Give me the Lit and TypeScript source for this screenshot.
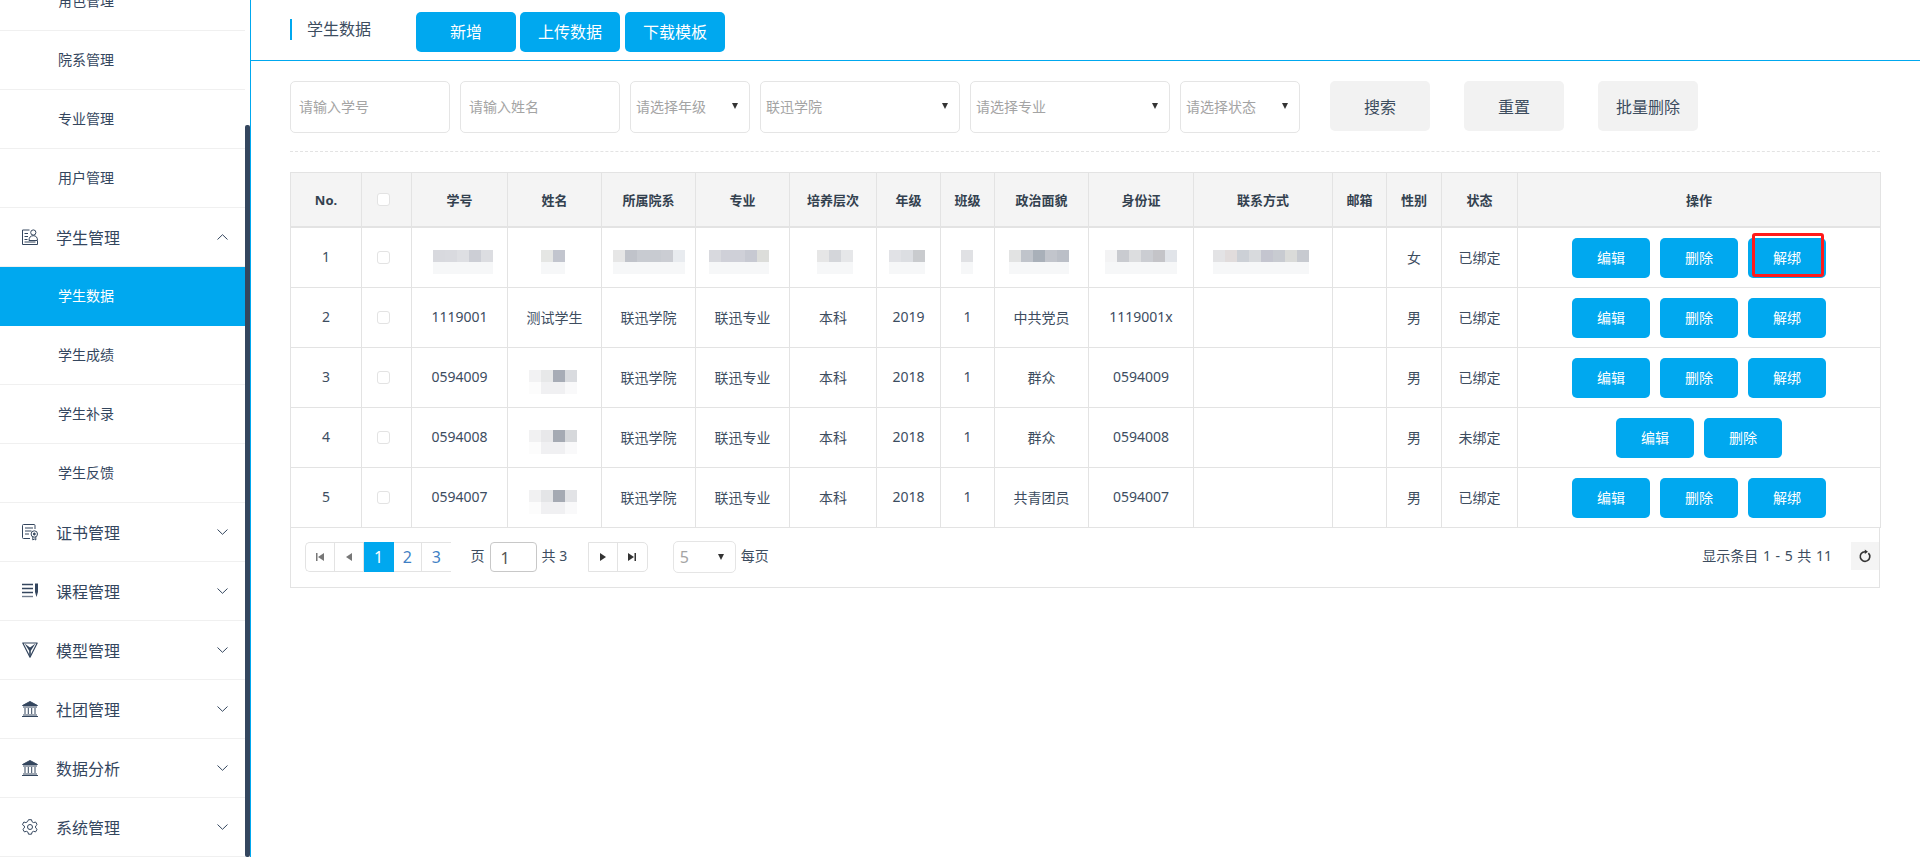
import { LitElement, html, css, svg, nothing } from "lit";
import { customElement } from "lit/decorators.js";

type Blur = { left: number; top: string[]; bottom?: string[] };
type Cell = string | Blur;

const widths = [71, 50, 96, 94, 94, 94, 87, 64, 54, 94, 105, 139, 54, 55, 76, 363];
const heads = ["No.", "", "学号", "姓名", "所属院系", "专业", "培养层次", "年级", "班级", "政治面貌", "身份证", "联系方式", "邮箱", "性别", "状态", "操作"];

const pale = "#f6f7f8";
const rows: { cells: Cell[]; unbound?: boolean; flagged?: boolean }[] = [
  {
    flagged: true,
    cells: [
      "1",
      { left: 21, top: ["#d8d9de", "#d9dadf", "#dedfe3", "#ccced5", "#dcdde1"] },
      { left: 33, top: ["#e5e6e4", "#c2c5ce"] },
      { left: 11, top: ["#e6e6e6", "#c0c3ca", "#c8cbd1", "#c8cbd1", "#cbcdd3", "#e8ebef"] },
      { left: 13, top: ["#d8d9de", "#cfd0d8", "#cfd0d8", "#c7c9d2", "#dcddda"] },
      { left: 27, top: ["#e6e6e6", "#d4d6da", "#e6e7e9"] },
      { left: 12, top: ["#e1e2e6", "#dcdee2", "#c9cbce"] },
      { left: 20, top: ["#e0e1e4"] },
      { left: 14, top: ["#e2e3e3", "#c0c4cb", "#a9b0b9", "#c2c5cc", "#bbbfc7"] },
      { left: 16, top: ["#f3f3f4", "#c9cbd0", "#dcdddf", "#cbcdd2", "#c4c4c8", "#e1e4e9"] },
      { left: 19, top: ["#e3e3e5", "#e1dcdc", "#ccd0d6", "#d8dadd", "#c4c5cf", "#c8cbd1", "#dadbd9", "#c7cad0"] },
      "",
      "女",
      "已绑定",
    ],
  },
  { cells: ["2", "1119001", "测试学生", "联迅学院", "联迅专业", "本科", "2019", "1", "中共党员", "1119001x", "", "", "男", "已绑定"] },
  {
    cells: [
      "3", "0594009",
      { left: 21, top: ["#f2f2f3", "#e7e8e9", "#a7acb6", "#d9dbdf"], bottom: ["#fcfcfc", "#f0f0f2", "#f0f0f2", "#f9f9fa"] },
      "联迅学院", "联迅专业", "本科", "2018", "1", "群众", "0594009", "", "", "男", "已绑定",
    ],
  },
  {
    unbound: true,
    cells: [
      "4", "0594008",
      { left: 21, top: ["#f1f1f2", "#e8e8ea", "#a5aab3", "#d6d8db"], bottom: ["#fcfcfc", "#f0f0f2", "#f0f0f2", "#f9f9fa"] },
      "联迅学院", "联迅专业", "本科", "2018", "1", "群众", "0594008", "", "", "男", "未绑定",
    ],
  },
  {
    cells: [
      "5", "0594007",
      { left: 21, top: ["#f1f1f2", "#e4e5e7", "#a5aab3", "#e2e3e6"], bottom: ["#fcfcfc", "#f0f0f2", "#f0f0f2", "#f9f9fa"] },
      "联迅学院", "联迅专业", "本科", "2018", "1", "共青团员", "0594007", "", "", "男", "已绑定",
    ],
  },
];

const bank = svg`<path d="M8 .5 15.5 4.500H.5z" fill="currentColor"/><path d="M1 6h14M3 7v6M6.300 7v6M9.700 7v6M13 7v6M1 14h14M0 15.500h16"/>`;

const icons = {
  student: svg`<path d="M7.500 1H.5v14.500h15V12"/><circle cx="11.300" cy="3.500" r="2.600"/><path d="M7 11.500c0-3.200 1.600-4.800 4.300-4.800s4.200 1.600 4.200 4.800zM2.500 4.500h3.500M2.500 7.500h3.500M2.500 10.500h3M2.500 13h11"/>`,
  cert: svg`<path d="M13 5V1.500a1 1 0 0 0-1-1H1.500a1 1 0 0 0-1 1v12a1 1 0 0 0 1 1H8M3 4h8M3 7h6.500M3 10h4"/><circle cx="12.300" cy="10" r="3.200"/><circle cx="12.300" cy="10" r="1" fill="currentColor"/><path d="M10.800 13v3l1.500-1 1.500 1v-3"/>`,
  course: svg`<path stroke-width="1.400" d="M0 1.500h11M0 5.500h11M0 9.500h11"/><path stroke-width="1.400" opacity=".7" d="M0 13.500h11"/><path fill="currentColor" stroke="none" d="M13 .5h3v8.500l-1.500 5-1.500-5z"/>`,
  model: svg`<path stroke-width="1.200" stroke-linejoin="round" d="M.8 1h14.400L8 15.200z"/><path fill="currentColor" stroke="none" d="M2.500 1.500 8 5.500l5.500-4L8.800 8.800V14H7.200V8.800z"/>`,
  bank,
  gear: svg`<path stroke-linejoin="round" d="M6.500.7h3l.5 2 1.600.9 2-.6 1.500 2.600-1.500 1.400v1.900l1.500 1.400-1.500 2.600-2-.6-1.600.9-.5 2h-3l-.5-2-1.600-.9-2 .6-1.500-2.600 1.500-1.400V7L.4 5.600 1.900 3l2 .6 1.600-.9z"/><circle cx="8" cy="8" r="2.500"/>`,
};

const menu: { label: string; icon?: keyof typeof icons; open?: boolean; active?: boolean }[] = [
  { label: "角色管理" },
  { label: "院系管理" },
  { label: "专业管理" },
  { label: "用户管理" },
  { label: "学生管理", icon: "student", open: true },
  { label: "学生数据", active: true },
  { label: "学生成绩" },
  { label: "学生补录" },
  { label: "学生反馈" },
  { label: "证书管理", icon: "cert" },
  { label: "课程管理", icon: "course" },
  { label: "模型管理", icon: "model" },
  { label: "社团管理", icon: "bank" },
  { label: "数据分析", icon: "bank" },
  { label: "系统管理", icon: "gear" },
];

@customElement("app-root")
export class AppRoot extends LitElement {
  static styles = css`
    :host {
      display: flex;
      height: 100vh;
      overflow: hidden;
      background: #fff;
      color: #3d4d5f;
      font-family: "Noto Sans", "Noto Sans CJK SC", sans-serif;
      font-size: 14px;
    }
    .sidebar {
      display: flex;
      flex: none;
      width: 250px;
      height: 857px;
      overflow: hidden;
    }
    .menu {
      flex: none;
      width: 245px;
      margin-top: -28px;
    }
    .menu__item {
      display: flex;
      align-items: center;
      box-sizing: border-box;
      height: 59px;
      border-bottom: 1px solid #f0f0f0;
      color: #34465e;
      font-size: 16px;
    }
    .menu__item--sub {
      padding: 0 0 2px 58px;
      font-size: 14px;
    }
    .menu__item--active {
      background: #00a8ef;
      border-bottom-color: #00a8ef;
      color: #fff;
    }
    .menu__icon {
      flex: none;
      width: 16px;
      height: 16px;
      margin: 0 18px 0 22px;
      fill: none;
      stroke: currentColor;
      stroke-width: 1;
      overflow: visible;
    }
    .menu__chevron {
      flex: none;
      width: 11px;
      height: 6px;
      margin: 0 17px 0 auto;
      fill: none;
      stroke: currentColor;
      stroke-width: 1;
    }
    .scrollbar {
      flex: none;
      width: 5px;
    }
    .scrollbar__thumb {
      height: 732px;
      margin-top: 125px;
      background: #34465e;
      border-radius: 2px;
    }
    .main {
      flex: 1;
      min-width: 0;
      border-left: 1px solid #00a8ef;
    }
    .topbar {
      display: flex;
      align-items: center;
      box-sizing: border-box;
      height: 61px;
      padding: 0 0 1px 39px;
      border-bottom: 1px solid #00a8ef;
    }
    .topbar__title {
      box-sizing: border-box;
      width: 126px;
      height: 21px;
      margin-top: -1px;
      padding-left: 15px;
      border-left: 2px solid #00a8ef;
      color: #3d4d5f;
      font-size: 16px;
      line-height: 21px;
    }
    .topbar__buttons {
      display: flex;
      gap: 4px;
      margin-top: 5px;
    }
    .topbar__buttons .btn-primary:last-child {
      margin-left: 1px;
    }
    button {
      font-family: inherit;
      border: 0;
      padding: 0;
    }
    .btn-primary {
      padding-bottom: 2px;
      background: #00a8ef;
      color: #fff;
      border-radius: 5px;
    }
    .topbar__buttons .btn-primary {
      width: 100px;
      height: 40px;
      font-size: 16px;
    }
    .content {
      padding: 20px 40px 0 39px;
    }
    .filters {
      display: flex;
      gap: 10px;
      height: 52px;
      padding-bottom: 18px;
      border-bottom: 1px dashed #e3e3e3;
    }
    .field {
      display: flex;
      align-items: center;
      justify-content: space-between;
      box-sizing: border-box;
      height: 52px;
      padding: 0 11px 2px 5px;
      border: 1px solid #e5e5e5;
      border-radius: 5px;
      background: #fff;
      color: #a4a4a4;
      font: inherit;
    }
    input.field {
      width: 160px;
      padding: 0 8px 2px;
      outline: none;
    }
    input.field::placeholder {
      color: #a4a4a4;
      opacity: 1;
    }
    .field--s {
      width: 120px;
    }
    .field--l {
      width: 200px;
    }
    .arrow {
      flex: none;
      width: 0;
      height: 0;
      border-left: 3px solid transparent;
      border-right: 3px solid transparent;
      border-top: 6px solid #333;
    }
    .filters__actions {
      display: flex;
      gap: 34px;
      margin-left: 20px;
    }
    .btn-plain {
      width: 100px;
      height: 50px;
      background: #f2f2f2;
      border-radius: 5px;
      color: #3d4d5f;
      font-size: 16px;
    }
    table {
      width: 1590px;
      margin-top: 20px;
      border-collapse: collapse;
      table-layout: fixed;
    }
    th,
    td {
      padding: 0;
      border: 1px solid #e3e3e3;
      text-align: center;
      font-weight: 400;
    }
    th {
      height: 53px;
      border-bottom-width: 2px;
      background: #f4f4f4;
      color: #33414f;
      font-size: 13px;
      font-weight: 700;
    }
    td {
      height: 59px;
    }
    td.text {
      height: 57px;
      padding-bottom: 2px;
    }
    .check {
      display: block;
      box-sizing: border-box;
      width: 13px;
      height: 13px;
      margin-left: 15px;
      border: 1px solid #e3e3e3;
      border-radius: 3px;
      background: #fff;
    }
    .blur {
      display: block;
      margin-top: 8px;
    }
    .actions {
      display: flex;
      justify-content: center;
      gap: 10px;
    }
    .actions .btn-primary {
      position: relative;
      width: 78px;
      height: 40px;
      font-size: 14px;
    }
    .flagged::after {
      content: "";
      position: absolute;
      top: -5px;
      left: 4px;
      right: 2px;
      bottom: 1px;
      border: 3px solid #ff1a1a;
      border-radius: 3px;
    }
    .footer {
      display: flex;
      align-items: flex-start;
      box-sizing: border-box;
      width: 1590px;
      height: 60px;
      padding: 14px 0 0 14px;
      border: 1px solid #e3e3e3;
      border-top: 0;
    }
    .pager {
      display: flex;
      height: 30px;
      border: solid #e3e3e3;
      border-width: 1px 0 1px 1px;
      box-sizing: border-box;
      border-radius: 5px 0 0 5px;
    }
    .pager--end {
      border-width: 1px;
      border-radius: 0 5px 5px 0;
      margin-left: 21px;
    }
    .pager__cell {
      display: flex;
      align-items: center;
      justify-content: center;
      box-sizing: border-box;
      width: 28.5px;
      border-right: 1px solid #e3e3e3;
      color: #3f7fc4;
      font-size: 16px;
    }
    .pager__cell:first-child {
      width: 29px;
    }
    .pager__cell:last-child {
      border-right: 0;
    }
    .pager__cell--active {
      width: 30px;
      margin: -1px 0;
      background: #00a8ef;
      border: 0;
      color: #fff;
    }
    .pager__cell svg {
      width: 8px;
      height: 8px;
      fill: #777;
    }
    .pager--end svg {
      fill: #333;
    }
    .pager-text {
      line-height: 28px;
      white-space: nowrap;
    }
    .pager-text--page {
      margin-left: 20px;
    }
    .page-input {
      box-sizing: border-box;
      width: 47px;
      height: 30px;
      margin: 0 5px;
      padding: 2px 0 0 10px;
      border: 1px solid #c8c8c8;
      border-radius: 4px;
      color: #555;
      font: inherit;
      font-size: 16px;
    }
    .size {
      width: 63px;
      height: 32px;
      margin: -1px 5px 0 25px;
      padding: 0 11px 0 6px;
      font-size: 16px;
    }
    .footer__info {
      margin-left: auto;
      line-height: 28px;
      word-spacing: 1px;
    }
    .refresh {
      display: flex;
      align-items: center;
      justify-content: center;
      flex: none;
      width: 28px;
      height: 28px;
      margin-left: 19px;
      background: #f4f4f4;
    }
    .refresh svg {
      width: 12px;
      height: 12px;
      fill: none;
      stroke: #333;
      stroke-width: 1.6;
      overflow: visible;
    }
  `;

  renderBlur(b: Blur) {
    return html`<svg
      class="blur"
      width=${b.top.length * 12}
      height="24"
      style="margin-left:${b.left}px"
    >
      ${b.top.map((c, i) => svg`<rect x=${i * 12} y="0" width="12" height="12" fill=${c} />`)}
      ${b.top.map(
        (_, i) => svg`<rect x=${i * 12} y="12" width="12" height="12" fill=${b.bottom ? b.bottom[i] : pale} />`
      )}
    </svg>`;
  }

  renderCell(c: Cell) {
    return typeof c === "string"
      ? html`<td class="text">${c}</td>`
      : html`<td>${this.renderBlur(c)}</td>`;
  }

  renderMenu() {
    return menu.map((m) =>
      m.icon
        ? html`<div class="menu__item">
            <svg class="menu__icon" viewBox="0 0 16 16">${icons[m.icon]}</svg>
            <span>${m.label}</span>
            <svg class="menu__chevron" viewBox="0 0 11 6">
              <path d=${m.open ? "M.5 5.500 5.500.7l5 4.800" : "M.5.500l5 4.800 5-4.800"} />
            </svg>
          </div>`
        : html`<div class="menu__item menu__item--sub ${m.active ? "menu__item--active" : ""}">${m.label}</div>`
    );
  }

  render() {
    return html`
      <aside class="sidebar">
        <nav class="menu">${this.renderMenu()}</nav>
        <div class="scrollbar"><div class="scrollbar__thumb"></div></div>
      </aside>
      <main class="main">
        <header class="topbar">
          <div class="topbar__title">学生数据</div>
          <div class="topbar__buttons">
            <button class="btn-primary">新增</button>
            <button class="btn-primary">上传数据</button>
            <button class="btn-primary">下载模板</button>
          </div>
        </header>
        <section class="content">
          <div class="filters">
            <input class="field" placeholder="请输入学号" />
            <input class="field" placeholder="请输入姓名" />
            <div class="field field--s">请选择年级<i class="arrow"></i></div>
            <div class="field field--l">联迅学院<i class="arrow"></i></div>
            <div class="field field--l">请选择专业<i class="arrow"></i></div>
            <div class="field field--s">请选择状态<i class="arrow"></i></div>
            <div class="filters__actions">
              <button class="btn-plain">搜索</button>
              <button class="btn-plain">重置</button>
              <button class="btn-plain">批量删除</button>
            </div>
          </div>
          <table>
            <colgroup>
              ${widths.map((w) => html`<col style="width:${w}px" />`)}
            </colgroup>
            <thead>
              <tr>
                ${heads.map((h, i) => html`<th>${i === 1 ? html`<i class="check"></i>` : h}</th>`)}
              </tr>
            </thead>
            <tbody>
              ${rows.map(
                (r) => html`<tr>
                  ${this.renderCell(r.cells[0])}
                  <td><i class="check"></i></td>
                  ${r.cells.slice(1).map((c) => this.renderCell(c))}
                  <td>
                    <div class="actions">
                      <button class="btn-primary">编辑</button>
                      <button class="btn-primary">删除</button>
                      ${r.unbound
                        ? nothing
                        : html`<button class="btn-primary ${r.flagged ? "flagged" : ""}">解绑</button>`}
                    </div>
                  </td>
                </tr>`
              )}
            </tbody>
          </table>
          <div class="footer">
            <div class="pager">
              <span class="pager__cell"><svg viewBox="0 0 8 8"><path d="M0 0h1.500v8H0zM8 0v8L2 4z" /></svg></span>
              <span class="pager__cell"><svg viewBox="0 0 8 8"><path d="M7 0v8L1 4z" /></svg></span>
              <span class="pager__cell pager__cell--active">1</span>
              <span class="pager__cell">2</span>
              <span class="pager__cell">3</span>
            </div>
            <span class="pager-text pager-text--page">页</span>
            <input class="page-input" value="1" />
            <span class="pager-text">共 3</span>
            <div class="pager pager--end">
              <span class="pager__cell"><svg viewBox="0 0 8 8"><path d="M1 0v8l6-4z" /></svg></span>
              <span class="pager__cell"><svg viewBox="0 0 8 8"><path d="M0 0v8l6-4zM6.500 0H8v8H6.500z" /></svg></span>
            </div>
            <div class="field size">5<i class="arrow"></i></div>
            <span class="pager-text">每页</span>
            <span class="footer__info">显示条目 1 - 5 共 11</span>
            <div class="refresh">
              <svg viewBox="0 0 12 12">
                <path d="M9.400 3.100A4.800 4.800 0 1 1 6 1.700" />
                <path d="M5.800 -.5v4.400l3.200-2.200z" fill="#333" stroke="none" />
              </svg>
            </div>
          </div>
        </section>
      </main>
    `;
  }
}
